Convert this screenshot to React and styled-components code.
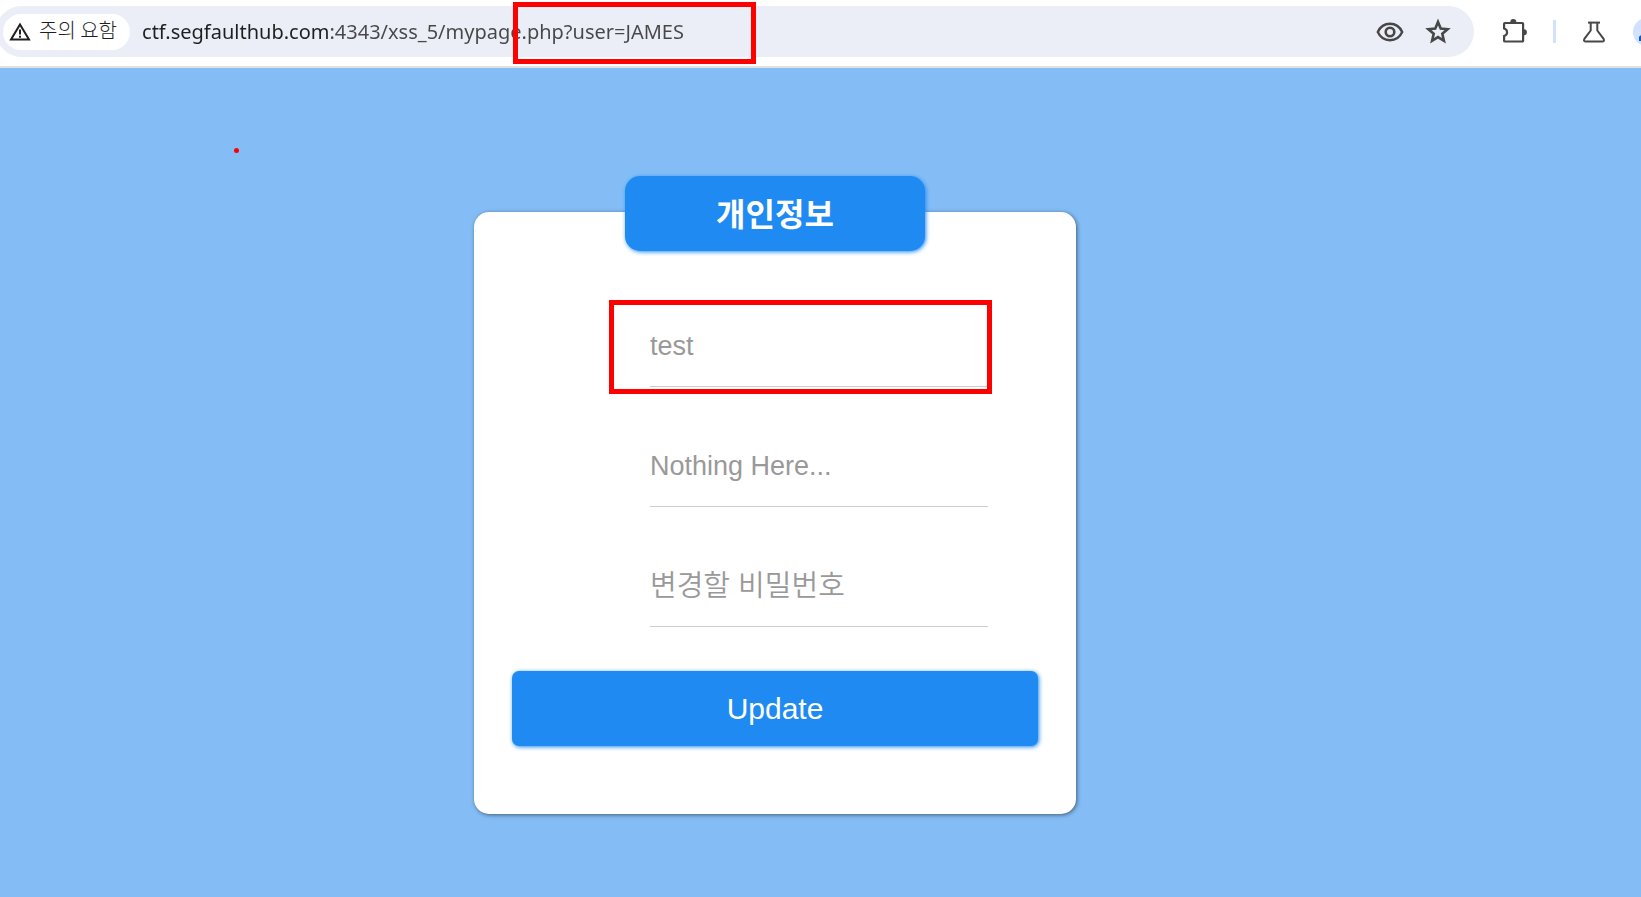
import React from "react";
import styled, { createGlobalStyle } from "styled-components";


//styledComponents
const GlobalStyle = createGlobalStyle`
    * {
        box-sizing: border-box;
    }
    body {
        margin: 0;
        overflow-x: hidden;
        font-family: "Liberation Sans", "Noto Sans CJK KR", sans-serif;
    }
`
const Page = styled.div`
    min-height: 100vh;
    display: flex;
    flex-direction: column;
    background: #84bdf6;
`
const Toolbar = styled.header`
    height: 68px;
    padding: 6px 0;
    display: flex;
    align-items: flex-start;
    overflow: hidden;
    background: #fff;
    border-bottom: 2px solid #dfe1e3;
`
const AddressBar = styled.div`
    position: relative;
    flex: 1;
    height: 51px;
    margin-left: -4px;
    padding: 0 22px 0 7px;
    display: flex;
    align-items: center;
    border-radius: 26px;
    background: #ebeef7;
`
const SiteChip = styled.button`
    height: 36px;
    padding: 0 13px 0 6px;
    display: flex;
    align-items: center;
    gap: 8px;
    border: 0;
    border-radius: 18px;
    background: #fff;
    color: #1f1f1f;
    font: 300 20px/32px "Noto Sans CJK KR", sans-serif;
    white-space: nowrap;
`
const ChipLabel = styled.span`
    padding-bottom: 4px;
`
const AddressInput = styled.input`
    flex: 1;
    min-width: 0;
    margin-left: 12px;
    padding: 0;
    border: 0;
    outline: 0;
    background: linear-gradient(90deg, #1f1f1f 186px, #474747 186px);
    background-clip: text;
    color: transparent;
    font: 20px/32px "Noto Sans", sans-serif;
`
const IconButton = styled.button`
    flex: none;
    width: 28px;
    height: 28px;
    padding: 0;
    border: 0;
    background: none;
    color: #474747;
    svg {
        display: block;
    }
`
const BarActions = styled.div`
    display: flex;
    gap: 20px;
`
const ToolbarActions = styled.div`
    flex: none;
    width: 167px;
    height: 51px;
    padding-left: 27px;
    display: flex;
    align-items: center;
    gap: 24px;
`
const Divider = styled.span`
    flex: none;
    width: 3px;
    height: 23px;
    background: #d0e2fd;
`
const Main = styled.main`
    flex: 1;
    position: relative;
    padding: 144px 91px 40px 0;
`
const Card = styled.form`
    max-width: 602px;
    margin: 0 auto;
    padding: 0 38px 68px;
    border-radius: 15px;
    background: #fff;
    box-shadow: 1px 1px 4px rgba(0, 0, 0, 0.5);
`
const Title = styled.h1`
    position: relative;
    top: -36px;
    max-width: 300px;
    height: 75px;
    margin: 0 auto -36px;
    padding-bottom: 4px;
    display: flex;
    align-items: center;
    justify-content: center;
    border-radius: 15px;
    background: #1f8bf2;
    box-shadow: 1px 1px 4px #1f8bf2;
    color: #fff;
    font: 700 32px "Noto Sans CJK KR", sans-serif;
`
const Fields = styled.div`
    padding: 56px 50px 44px 138px;
    display: flex;
    flex-direction: column;
    gap: 40px;
`
const Field = styled.div`
    position: relative;
`
const FieldInput = styled.input`
    display: block;
    width: 100%;
    height: 80px;
    padding: 0;
    border: 0;
    border-bottom: 1px solid #ccc;
    outline: 0;
    background: none;
    font-family: "Liberation Sans", "Noto Sans CJK KR", sans-serif;
    font-size: ${({$korean}) => $korean ? "29px" : "27px"};
    font-weight: ${({$korean}) => $korean ? 350 : 400};
    &::placeholder {
        color: #999;
        opacity: 1;
    }
`
const SubmitButton = styled.button`
    display: block;
    width: 100%;
    height: 75px;
    padding: 0;
    border: 0;
    border-radius: 7px;
    background: #1f8bf2;
    box-shadow: 1px 1px 4px #1f8bf2;
    color: #fff;
    font: 30px "Liberation Sans", Arial, sans-serif;
`
const Marker = styled.div`
    position: absolute;
    border: 5px solid #f00;
    pointer-events: none;
`
const AddressMarker = styled(Marker)`
    top: -4px;
    left: 517px;
    width: 243px;
    height: 62px;
`
const FieldMarker = styled(Marker)`
    top: -7px;
    bottom: -7px;
    left: -41px;
    right: -4px;
`
const Dot = styled.div`
    position: absolute;
    top: 80px;
    left: 234px;
    width: 5px;
    height: 5px;
    border-radius: 50%;
    background: #f00;
`

const fields = [
    {name: "id", label: "아이디", placeholder: "test"},
    {name: "info", label: "정보", placeholder: "Nothing Here..."},
    {name: "pw", label: "비밀번호", placeholder: "변경할 비밀번호", korean: true},
]

//icons
function WarningIcon(){
    return(
        <svg width="22" height="20" viewBox="0 0 22 20" fill="none" stroke="currentColor" strokeWidth="2">
            <path d="M11 2.4 L20 17.5 H2 Z" />
            <path d="M11 7.5 V12.5 M11 13.8 V15.8" />
        </svg>
    )
}

function EyeIcon(){
    return(
        <svg width="28" height="28" viewBox="0 0 28 28" fill="none" stroke="currentColor" strokeWidth="2.4">
            <path d="M1.8 14 C4.2 8.8 8.8 5.8 14 5.8 S23.8 8.8 26.2 14 C23.8 19.2 19.2 22.2 14 22.2 S4.2 19.2 1.8 14 Z" />
            <circle cx="14" cy="14" r="4.3" strokeWidth="2.6" />
        </svg>
    )
}

function StarIcon(){
    return(
        <svg width="28" height="28" viewBox="0 0 28 28" fill="none" stroke="currentColor" strokeWidth="2.6">
            <path d="M14 4 L16.7 10.6 L23.6 11.2 L18.3 15.8 L19.9 22.8 L14 19.1 L8.1 22.8 L9.7 15.8 L4.4 11.2 L11.3 10.6 Z" />
        </svg>
    )
}

function ExtensionIcon(){
    return(
        <svg width="28" height="28" viewBox="0.5 1.5 28 28" fill="none" stroke="currentColor" strokeWidth="2.2">
            <path d="M4.4 6.5 H21.8 Q22.6 6.5 22.6 7.3 V24.2 Q22.6 25 21.8 25 H4.4 Q3.6 25 3.6 24.2 V19.6 Q6.6 18.6 6.6 15.8 T3.6 12 V7.3 Q3.6 6.5 4.4 6.5 Z" />
            <path d="M9.8 5.6 A3 3 0 0 1 15.8 5.6 Z M23.4 12.8 A3 3 0 0 1 23.4 18.8 Z" fill="currentColor" stroke="none" />
        </svg>
    )
}

function FlaskIcon(){
    return(
        <svg width="28" height="28" viewBox="0 0 28 28" fill="none" stroke="currentColor" strokeWidth="2">
            <path d="M8 4.6 H20" />
            <path d="M10.7 5 V12.5 L4.4 20.8 Q3.2 23.4 5.4 23.4 H22.6 Q24.8 23.4 23.6 20.8 L17.3 12.5 V5" />
        </svg>
    )
}

function AvatarIcon(){
    return(
        <svg width="28" height="28" viewBox="-1 0 28 28">
            <circle cx="14" cy="14" r="14" fill="#d0e2fd" />
            <path d="M6 23 V19 Q7 17 10 17 H18 Q21 17 22 19 V23 Z" fill="#0b57d0" />
        </svg>
    )
}

function BrowserBar(){
    return(
        <Toolbar>
            <AddressBar>
                <SiteChip type="button">
                    <WarningIcon />
                    <ChipLabel>주의 요함</ChipLabel>
                </SiteChip>
                <AddressInput
                    aria-label="주소창"
                    spellCheck={false}
                    defaultValue="ctf.segfaulthub.com:4343/xss_5/mypage.php?user=JAMES"
                />
                <BarActions>
                    <IconButton type="button" aria-label="보기"><EyeIcon /></IconButton>
                    <IconButton type="button" aria-label="북마크"><StarIcon /></IconButton>
                </BarActions>
                <AddressMarker />
            </AddressBar>
            <ToolbarActions>
                <IconButton type="button" aria-label="확장 프로그램"><ExtensionIcon /></IconButton>
                <Divider />
                <IconButton type="button" aria-label="실험실"><FlaskIcon /></IconButton>
                <IconButton type="button" aria-label="프로필"><AvatarIcon /></IconButton>
            </ToolbarActions>
        </Toolbar>
    )
}

export default function App(){
    return(
        <Page>
            <GlobalStyle />
            <BrowserBar />
            <Main>
                <Dot />
                <Card onSubmit={(e) => e.preventDefault()}>
                    <Title>개인정보</Title>
                    <Fields>
                        {fields.map((field) => (
                            <Field key={field.name}>
                                <FieldInput
                                    name={field.name}
                                    aria-label={field.label}
                                    placeholder={field.placeholder}
                                    $korean={field.korean}
                                />
                                {field.name === "id" && <FieldMarker />}
                            </Field>
                        ))}
                    </Fields>
                    <SubmitButton type="submit">Update</SubmitButton>
                </Card>
            </Main>
        </Page>
    )
}
